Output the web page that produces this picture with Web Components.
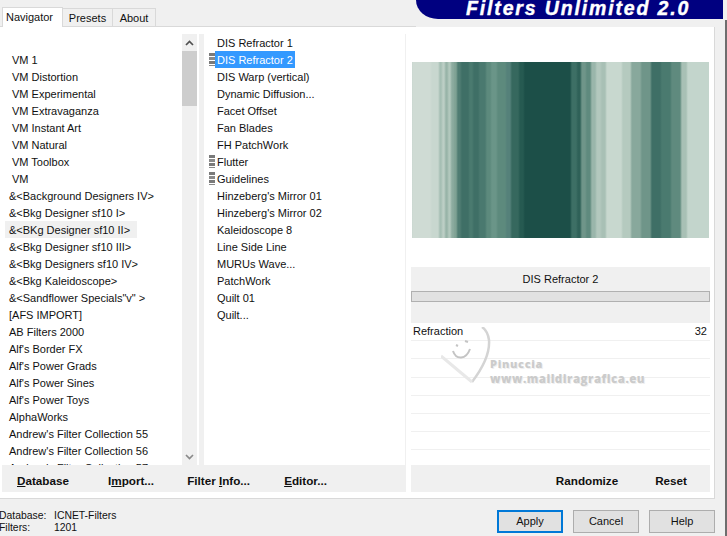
<!DOCTYPE html>
<html>
<head>
<meta charset="utf-8">
<style>
  html, body { margin: 0; height: 100%; background: #f0f0f0; overflow: hidden; }
  body { font: 11px "Liberation Sans", sans-serif; color: #111; }
</style>
</head>
<body>
<filters-dialog></filters-dialog>

<script>
const FONT = '"Liberation Sans", sans-serif';

// Tabs and the navy title, side by side above the panel
class DialogHeader extends HTMLElement {
  connectedCallback() {
    const shadow = this.attachShadow({ mode: 'open' });
    shadow.innerHTML = `
      <style>
        :host { display: flex; height: 27px; justify-content: space-between; }
        .tabs { display: flex; align-items: flex-end; padding-left: 2px; border-bottom: 1px solid #d9d9d9; flex: 1; }
        .tab { height: 18px; width: 51px; text-align: center; line-height: 19px; border: 1px solid #d9d9d9; border-bottom: 0; margin-left: -1px; box-sizing: border-box; background: #f0f0f0; }
        .tab.on { height: 20px; width: 61px; background: #fff; padding-right: 6px; margin-bottom: -1px; line-height: 18px; margin-left: 0; }
        .tab.last { width: 44px; }
        .banner { width: 307px; height: 19px; margin-right: 4px; background: #000080; border-bottom-left-radius: 22px 19px; color: #fff; font: italic bold 19.5px/17px ${FONT}; -webkit-text-stroke: .4px #fff; letter-spacing: 1.85px; padding-left: 50px; box-sizing: border-box; white-space: nowrap; }
      </style>
      <div class="tabs">
        <div class="tab on">Navigator</div>
        <div class="tab">Presets</div>
        <div class="tab last">About</div>
      </div>
      <div class="banner">Filters Unlimited 2.0</div>
    `;
  }
}
customElements.define('dialog-header', DialogHeader);

// Plain list, optional marker bars and selected row
class FilterList extends HTMLElement {
  connectedCallback() {
    this.attachShadow({ mode: 'open' });
  }

  set items(items) {
    const rows = items.map(item => {
      const classes = ['row'];
      if (item.sel) classes.push('sel');
      if (item.hover) classes.push('hover');
      if (item.indent) classes.push('indent');
      const marker = item.mark ? '<i class="mark"></i>' : '';
      return `<div class="${classes.join(' ')}">${marker}<span>${item.text.replace(/&/g, '&amp;').replace(/</g, '&lt;')}</span></div>`;
    }).join('');
    this.shadowRoot.innerHTML = `
      <style>
        :host { display: block; overflow: hidden; background: #fff; box-sizing: border-box; }
        .row { position: relative; height: 17px; white-space: nowrap; }
        .row span { display: inline-block; height: 17px; line-height: 19px; padding: 0 2px; vertical-align: top; }
        :host(.wide) .row span { padding-left: 4px; }
        :host(.wide) .indent span { padding-left: 7px; }
        .sel span { background: #3399ff; color: #fff; }
        :host(.wide) .hover span { background: #f0f0f0; padding-right: 7px; }
        .mark { position: absolute; left: -6px; top: 2px; width: 6px; height: 13px;
          background: repeating-linear-gradient(#7a7a7a 0 3px, #fff 3px 4px, #8a8a8a 4px 7px, #fff 7px 8px); }
      </style>
      ${rows}
    `;
  }
}
customElements.define('filter-list', FilterList);

class ListScrollbar extends HTMLElement {
  connectedCallback() {
    const shadow = this.attachShadow({ mode: 'open' });
    shadow.innerHTML = `
      <style>
        :host { display: flex; flex-direction: column; width: 15px; background: #f0f0f0; }
        .btn { height: 17px; display: flex; align-items: center; justify-content: center; }
        .thumb { height: 55px; background: #cdcdcd; }
        .track { flex: 1; }
      </style>
      <div class="btn"><svg width="9" height="6" viewBox="0 0 9 6"><path d="M1 5 L4.5 1.5 L8 5" fill="none" stroke="#505050" stroke-width="1.7"/></svg></div>
      <div class="thumb"></div>
      <div class="track"></div>
      <div class="btn"><svg width="9" height="6" viewBox="0 0 9 6"><path d="M1 1 L4.5 4.5 L8 1" fill="none" stroke="#8a8a8a" stroke-width="1.7"/></svg></div>
    `;
  }
}
customElements.define('list-scrollbar', ListScrollbar);

// Preview strip: vertical bands read from the reference
class PreviewStrip extends HTMLElement {
  connectedCallback() {
    const shadow = this.attachShadow({ mode: 'open' });
    // [x offset, colour] pairs, x from the strip's left edge
    const bands = [
      [0, '#c8d6cf'], [1, '#cfdbd4'], [20, '#c8d7cf'], [28, '#a6bfb4'], [31, '#bccec5'], [34, '#98b4a8'],
      [37, '#b2c8bd'], [40, '#8cab9f'], [43, '#7fa294'], [46, '#4f7c72'], [50, '#3f6f66'], [58, '#4a7a6f'],
      [62, '#3f6f66'], [68, '#4a796f'], [75, '#5d8a7d'], [80, '#6a9588'], [86, '#5d8a7d'], [95, '#55817a'],
      [100, '#36685e'], [108, '#265a51'], [113, '#1c4f48'], [160, '#3d6f65'], [166, '#2f6158'], [170, '#6f9589'],
      [175, '#5f8a7e'], [180, '#9ab6ab'], [185, '#b3c8be'], [190, '#a8c0b5'], [195, '#c8d8cf'], [211, '#b5cabf'],
      [220, '#88a89c'], [230, '#6f9589'], [240, '#3f6f66'], [250, '#4a7a6f'], [260, '#5f8a7e'], [270, '#a8c0b5'],
      [276, '#c3d5cc']
    ];
    const stops = bands.map(([x, color], i) => {
      const end = i + 1 < bands.length ? bands[i + 1][0] - 2 : 298;
      return `${color} ${x}px ${Math.max(x, end)}px`;
    }).join(',');
    shadow.innerHTML = `
      <style>
        :host { display: block; height: 176px; background: linear-gradient(90deg, ${stops}); }
      </style>
    `;
  }
}
customElements.define('preview-strip', PreviewStrip);

// Filter name, slider well and the parameter rows
class ParamPanel extends HTMLElement {
  connectedCallback() {
    const shadow = this.attachShadow({ mode: 'open' });
    const empties = Array.from({ length: 6 }, () => '<div class="row"></div>').join('');
    shadow.innerHTML = `
      <style>
        :host { display: block; position: relative; }
        .head { height: 56px; background: #f0f0f0; padding-top: 4px; box-sizing: border-box; text-align: center; }
        .name { height: 18px; line-height: 17px; }
        .well { margin-top: 2px; background: #e1e1e1; border: 1px solid #b0b0b0; height: 9px; }
        .row { height: 18.2px; box-sizing: border-box; border-bottom: 1px solid #f0f0f0; display: flex; justify-content: space-between; padding: 0 3px 0 2px; line-height: 16px; }
        .mark { position: absolute; left: 30px; top: 60px; pointer-events: none; color: #cbcbcb; font-weight: bold; white-space: nowrap; }
        .mark svg { position: absolute; left: 0; top: 0; }
        .mark b { position: absolute; white-space: nowrap; text-shadow: 1px 1px 0 #efefef; font-family: "Open Sans", sans-serif; }
        .who { left: 49px; top: 29px; font-size: 11px; letter-spacing: .7px; }
        .url { left: 49px; top: 44px; font-size: 11.5px; letter-spacing: .5px; }
      </style>
      <div class="head">
        <div class="name">DIS Refractor 2</div>
        <div class="well"></div>
      </div>
      <div class="row"><span>Refraction</span><span>32</span></div>
      ${empties}
      <div class="mark">
        <svg width="50" height="62" viewBox="0 0 50 62" fill="none">
          <path d="M31 55 C41 42 49 26 48 13 C47 6 44 2 41 0" stroke="#d4d4d4" stroke-width="2.5"/>
          <path d="M0 29 L31 55" stroke="#e8e8e8" stroke-width="3"/>
          <path d="M12 24 C15 33 25 33 29 22 M24 14 l3 1 M15 18 l2 1" stroke="#c4c4c4" stroke-width="2"/>
        </svg>
        <b class="who">Pinuccia</b>
        <b class="url">www.maildiragrafica.eu</b>
      </div>
    `;
  }
}
customElements.define('param-panel', ParamPanel);

class CmdBar extends HTMLElement {
  connectedCallback() {
    const shadow = this.attachShadow({ mode: 'open' });
    shadow.innerHTML = `
      <style>
        :host { display: flex; height: 27px; box-sizing: border-box; padding-top: 4px; align-items: center; background: #f0f0f0; font: bold 11.7px ${FONT}; white-space: nowrap; }
        ::slotted(span) { display: block; }
      </style>
      <slot></slot>
    `;
  }
}
customElements.define('cmd-bar', CmdBar);

class PushButton extends HTMLElement {
  connectedCallback() {
    const shadow = this.attachShadow({ mode: 'open' });
    shadow.innerHTML = `
      <style>
        :host { display: flex; width: 66px; height: 23px; padding-bottom: 1px; box-sizing: border-box; align-items: center; justify-content: center; background: #e1e1e1; border: 1px solid #adadad; }
        :host([primary]) { border: 2px solid #0078d7; }
      </style>
      <slot></slot>
    `;
  }
}
customElements.define('push-button', PushButton);

class FiltersDialog extends HTMLElement {
  connectedCallback() {
    const shadow = this.attachShadow({ mode: 'open' });
    shadow.innerHTML = `
      <style>
        :host { display: block; width: 727px; height: 536px; overflow: hidden; color: #111; background: #f0f0f0 linear-gradient(#6e6e6e, #6e6e6e) right 20px / 2px 100% no-repeat; }
        .panel { height: 472px; width: 715px; box-sizing: border-box; background: #fff; border-right: 1px solid #d9d9d9; border-bottom: 1px solid #d9d9d9; padding: 7px 0 0 5px; display: grid; grid-template-columns: 177px 15px 2px 5px 201px 1px 5px 299px; grid-template-rows: 431px 27px; }
        .gap { background: #f0f0f0; }
        #main { padding-left: 11px; }
        #left { padding-top: 17px; }
        .right { grid-column: 8; grid-row: 1 / 3; display: flex; flex-direction: column; }
        .shot { margin: 28px 1px 0; }
        .spacer { height: 29px; }
        .fill { flex: 1; }
        .left-bar { grid-column: 1 / 6; grid-row: 2; margin-left: -3px; margin-right: -1px; }
        .rule { grid-column: 6; grid-row: 1 / 3; background: #f0f0f0; }
        .u { text-decoration: underline; }
        .left-bar > span:nth-child(1) { margin-left: 15px; }
        .left-bar > span:nth-child(2) { margin-left: 39px; }
        .left-bar > span:nth-child(3) { margin-left: 33px; }
        .left-bar > span:nth-child(4) { margin-left: 34px; }
        .right-bar { justify-content: flex-end; }
        .right-bar > span:nth-child(1) { margin-right: 37px; }
        .right-bar > span:nth-child(2) { margin-right: 23px; }
        .foot { display: flex; justify-content: space-between; align-items: flex-start; padding: 11px 12px 0 0; }
        .status { display: grid; grid-template-columns: 55px auto; margin: 0 0 0 -1px; line-height: 12px; font-size: 10.4px; }
        .btns { display: flex; gap: 10px; }
      </style>
      <dialog-header></dialog-header>
      <div class="panel">
        <filter-list id="left" class="wide"></filter-list>
        <list-scrollbar></list-scrollbar>
        <div></div>
        <div class="gap"></div>
        <filter-list id="main"></filter-list>
        <div class="rule"></div>
        <div></div>
        <div class="right">
          <preview-strip class="shot"></preview-strip>
          <div class="spacer"></div>
          <param-panel></param-panel>
          <div class="fill"></div>
          <cmd-bar class="right-bar"><span>Randomize</span><span>Reset</span></cmd-bar>
        </div>
        <cmd-bar class="left-bar">
          <span><span class="u">D</span>atabase</span>
          <span>I<span class="u">m</span>port...</span>
          <span>Filter <span class="u">I</span>nfo...</span>
          <span><span class="u">E</span>ditor...</span>
        </cmd-bar>
      </div>
      <div class="foot">
        <div class="status">
          <span>Database:</span><span>ICNET-Filters</span>
          <span>Filters:</span><span>1201</span>
        </div>
        <div class="btns">
          <push-button primary>Apply</push-button>
          <push-button>Cancel</push-button>
          <push-button>Help</push-button>
        </div>
      </div>
    `;

    shadow.querySelector('#left').items = [
      ...['VM 1', 'VM Distortion', 'VM Experimental', 'VM Extravaganza', 'VM Instant Art', 'VM Natural', 'VM Toolbox', 'VM']
        .map(text => ({ text, indent: true })),
      ...['&<Background Designers IV>', '&<Bkg Designer sf10 I>', '&<BKg Designer sf10 II>', '&<Bkg Designer sf10 III>',
        '&<Bkg Designers sf10 IV>', '&<Bkg Kaleidoscope>', '&<Sandflower Specials"v" >', '[AFS IMPORT]', 'AB Filters 2000',
        "Alf's Border FX", "Alf's Power Grads", "Alf's Power Sines", "Alf's Power Toys", 'AlphaWorks',
        "Andrew's Filter Collection 55", "Andrew's Filter Collection 56", "Andrew's Filter Collection 57"]
        .map(text => ({ text, hover: text === '&<BKg Designer sf10 II>' }))
    ];

    shadow.querySelector('#main').items = ['DIS Refractor 1', 'DIS Refractor 2', 'DIS Warp (vertical)', 'Dynamic Diffusion...', 'Facet Offset', 'Fan Blades',
      'FH PatchWork', 'Flutter', 'Guidelines', "Hinzeberg's Mirror 01", "Hinzeberg's Mirror 02", 'Kaleidoscope 8', 'Line Side Line',
      'MURUs Wave...', 'PatchWork', 'Quilt 01', 'Quilt...'
    ].map(text => ({
      text,
      sel: text === 'DIS Refractor 2',
      mark: ['DIS Refractor 2', 'Flutter', 'Guidelines'].includes(text)
    }));
  }
}
customElements.define('filters-dialog', FiltersDialog);
</script>
</body>
</html>
